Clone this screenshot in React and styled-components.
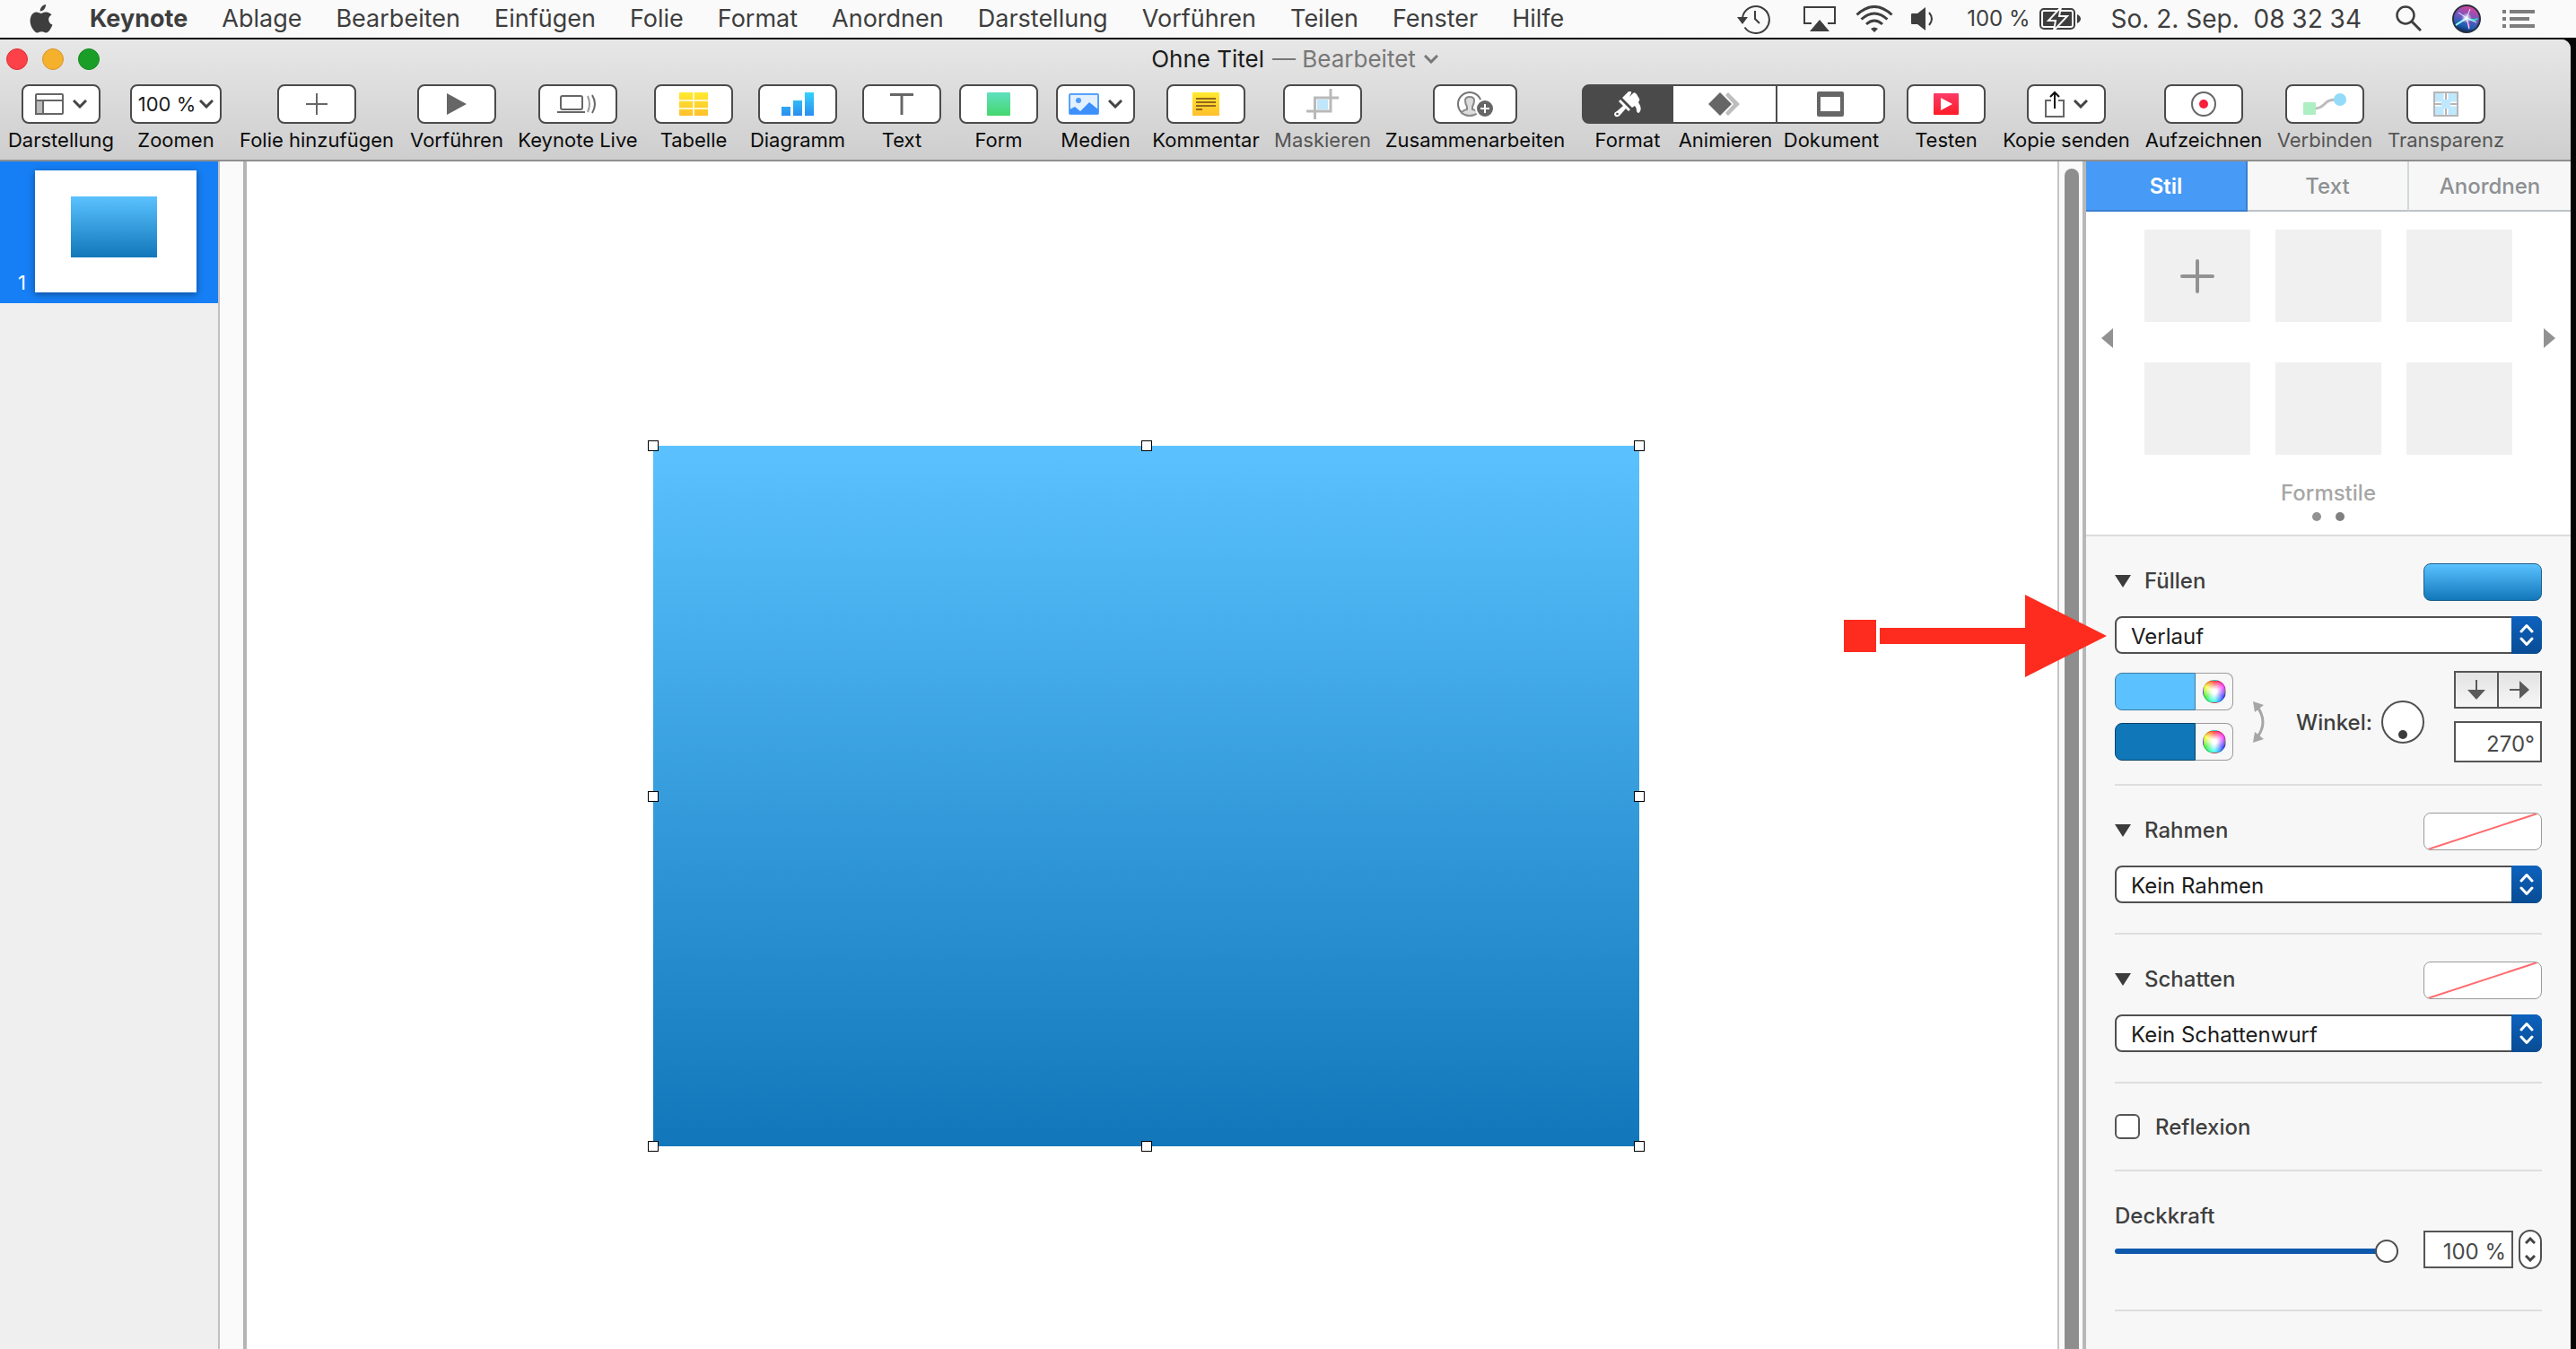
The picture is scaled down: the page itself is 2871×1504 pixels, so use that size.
import React from 'react';
import styled, { createGlobalStyle } from 'styled-components';

const MENUS = [
  'Ablage',
  'Bearbeiten',
  'Einfügen',
  'Folie',
  'Format',
  'Anordnen',
  'Darstellung',
  'Vorführen',
  'Teilen',
  'Fenster',
  'Hilfe',
];

function App() {
  return (
    <Desktop>
      <GlobalStyle />
      <MenuBar />
      <Window>
        <WindowHeader>
          <TitleBar />
          <Toolbar />
        </WindowHeader>
        <WindowBody>
          <Navigator />
          <Canvas />
          <Inspector />
        </WindowBody>
      </Window>
    </Desktop>
  );
}

function MenuBar() {
  return (
    <MenuBarWrapper>
      <MenuButton aria-label='Apple'>
        <AppleIcon />
      </MenuButton>
      <MenuList>
        <MenuButton $bold>Keynote</MenuButton>
        {MENUS.map((menu) => (
          <MenuButton key={menu}>{menu}</MenuButton>
        ))}
      </MenuList>
      <StatusArea>
        <TimeMachineIcon />
        <Status $gap={37}>
          <AirPlayIcon />
        </Status>
        <Status $gap={22}>
          <WifiIcon />
        </Status>
        <Status $gap={20}>
          <VolumeIcon />
        </Status>
        <Status $gap={36} $small>
          100 %
        </Status>
        <Status $gap={10}>
          <BatteryIcon />
        </Status>
        <Status $gap={34}>{'So. 2. Sep.  08 32 34'}</Status>
        <Status $gap={38}>
          <SearchIcon />
        </Status>
        <Status $gap={34}>
          <SiriIcon />
        </Status>
        <Status $gap={24}>
          <ListIcon />
        </Status>
      </StatusArea>
    </MenuBarWrapper>
  );
}

function TitleBar() {
  return (
    <TitleRow>
      <TrafficLights>
        <Light $color='#fc4148' $edge='#dd3038' aria-label='Schließen' />
        <Light $color='#f5b02c' $edge='#d8962a' aria-label='Minimieren' />
        <Light $color='#1a9e28' $edge='#128a20' aria-label='Vergrößern' />
      </TrafficLights>
      <Title>
        Ohne Titel <Edited>— Bearbeitet</Edited>
        <Chevron color='#777' />
      </Title>
    </TitleRow>
  );
}

function Toolbar() {
  return (
    <Tools>
      <Tool label='Darstellung' width={114}>
        <LayoutIcon />
        <Chevron />
      </Tool>
      <Tool label='Zoomen' width={102} buttonWidth={102} tight>
        100 %
        <Chevron />
      </Tool>
      <Tool label='Folie hinzufügen' width={172}>
        <PlusIcon />
      </Tool>
      <Tool label='Vorführen' width={100}>
        <PlayIcon />
      </Tool>
      <Tool label='Keynote Live' width={130}>
        <LiveIcon />
      </Tool>
      <Tool label='Tabelle' width={88}>
        <TableIcon />
      </Tool>
      <Tool label='Diagramm' width={104}>
        <ChartIcon />
      </Tool>
      <Tool label='Text' width={88}>
        <TextIcon />
      </Tool>
      <Tool label='Form' width={88}>
        <ShapeIcon />
      </Tool>
      <Tool label='Medien' width={88}>
        <MediaIcon />
        <Chevron />
      </Tool>
      <Tool label='Kommentar' width={118}>
        <CommentIcon />
      </Tool>
      <Tool label='Maskieren' width={102} disabled>
        <MaskIcon />
      </Tool>
      <Tool label='Zusammenarbeiten' width={198} buttonWidth={94}>
        <CollaborateIcon />
      </Tool>
      <Segments>
        <Segment>
          <SegmentButton id='seg-format' $active $width={102}>
            <BrushIcon />
          </SegmentButton>
          <ToolLabel htmlFor='seg-format'>Format</ToolLabel>
        </Segment>
        <Segment>
          <SegmentButton id='seg-animate' $width={116}>
            <AnimateIcon />
          </SegmentButton>
          <ToolLabel htmlFor='seg-animate'>Animieren</ToolLabel>
        </Segment>
        <Segment>
          <SegmentButton id='seg-document' $width={120}>
            <DocumentIcon />
          </SegmentButton>
          <ToolLabel htmlFor='seg-document'>Dokument</ToolLabel>
        </Segment>
      </Segments>
      <Tool label='Testen' width={88}>
        <TestIcon />
      </Tool>
      <Tool label='Kopie senden' width={140}>
        <ShareIcon />
        <Chevron />
      </Tool>
      <Tool label='Aufzeichnen' width={126}>
        <RecordIcon />
      </Tool>
      <Tool label='Verbinden' width={104} disabled>
        <ConnectIcon />
      </Tool>
      <Tool label='Transparenz' width={126} disabled>
        <AlphaIcon />
      </Tool>
    </Tools>
  );
}

function Tool({ label, width, buttonWidth = 88, tight, disabled, children }) {
  const id = React.useId();

  return (
    <ToolWrapper $width={width}>
      <ToolButton id={id} $width={buttonWidth} $tight={tight} disabled={disabled}>
        {children}
      </ToolButton>
      <ToolLabel htmlFor={id} $disabled={disabled}>
        {label}
      </ToolLabel>
    </ToolWrapper>
  );
}

function Navigator() {
  return (
    <>
      <Sidebar>
        <SlideItem>
          <SlideNumber>1</SlideNumber>
          <Thumbnail>
            <ThumbnailShape />
          </Thumbnail>
        </SlideItem>
      </Sidebar>
      <SidebarGutter />
    </>
  );
}

function Canvas() {
  return (
    <>
      <Stage>
        <SelectedShape>
          {[0, 50, 100].map((y) =>
            [0, 50, 100].map((x) =>
              x === 50 && y === 50 ? null : (
                <Handle key={`${x}-${y}`} $x={x} $y={y} />
              )
            )
          )}
        </SelectedShape>
      </Stage>
      <ScrollTrack>
        <ScrollThumb />
      </ScrollTrack>
    </>
  );
}

function Inspector() {
  return (
    <Panel>
      <Tabs role='tablist'>
        <Tab role='tab' aria-selected='true' $active>
          Stil
        </Tab>
        <Tab role='tab'>Text</Tab>
        <Tab role='tab'>Anordnen</Tab>
      </Tabs>
      <ShapeStyles />
      <Sections>
        <FillSection />
        <Section>
          <SectionHeader title='Rahmen' />
          <Popup label='Rahmenart' value='Kein Rahmen' />
        </Section>
        <Section>
          <SectionHeader title='Schatten' />
          <Popup label='Schattenart' value='Kein Schattenwurf' />
        </Section>
        <CheckSection>
          <Checkbox type='checkbox' id='reflection' />
          <label htmlFor='reflection'>Reflexion</label>
        </CheckSection>
        <OpacitySection />
      </Sections>
    </Panel>
  );
}

function ShapeStyles() {
  return (
    <StylesWrapper>
      <StylesRow>
        <PageButton aria-label='Zurück'>
          <svg width='13' height='22'>
            <path d='M13 0V22L0 11z' fill='#929292' />
          </svg>
        </PageButton>
        <StylesGrid>
          <StyleBox aria-label='Stil hinzufügen'>
            <svg width='38' height='38' stroke='#929292' strokeWidth='4'>
              <path d='M19 2V36M2 19H36' strokeLinecap='round' />
            </svg>
          </StyleBox>
          {[2, 3, 4, 5, 6].map((n) => (
            <StyleBox key={n} aria-label={`Formstil ${n}`} />
          ))}
        </StylesGrid>
        <PageButton aria-label='Weiter'>
          <svg width='13' height='22'>
            <path d='M0 0V22L13 11z' fill='#929292' />
          </svg>
        </PageButton>
      </StylesRow>
      <StylesCaption>Formstile</StylesCaption>
      <Dots>
        <Dot $color='#929292' />
        <Dot $color='#808080' />
      </Dots>
    </StylesWrapper>
  );
}

function SectionHeader({ title, filled }) {
  return (
    <HeaderRow>
      <Disclosure aria-expanded='true'>
        <svg width='18' height='14'>
          <path d='M0 0H18L9 14z' fill='#3c3c3c' />
        </svg>
        {title}
      </Disclosure>
      <Preview $filled={filled} aria-label={`${title} auswählen`}>
        {!filled && (
          <svg width='130' height='40' stroke='#ff6b6e' strokeWidth='2'>
            <path d='M4 40L126 0' />
          </svg>
        )}
      </Preview>
    </HeaderRow>
  );
}

function Popup({ label, value }) {
  return (
    <PopupWrapper>
      <Select aria-label={label} defaultValue={value}>
        <option>{value}</option>
      </Select>
      <PopupCap>
        <svg width='16' height='26' fill='none' stroke='white' strokeWidth='3'>
          <path
            d='M2 9L8 2.500L14 9M2 17L8 23.500L14 17'
            strokeLinecap='round'
            strokeLinejoin='round'
          />
        </svg>
      </PopupCap>
    </PopupWrapper>
  );
}

function FillSection() {
  return (
    <Section>
      <SectionHeader title='Füllen' filled />
      <PopupAnchor>
        <Popup label='Füllart' value='Verlauf' />
        <Arrow width='293' height='92' fill='#fd2c1f'>
          <rect x='0' y='28' width='36' height='36' />
          <rect x='40' y='37' width='165' height='18' />
          <path d='M202 0V92L293 46z' />
        </Arrow>
      </PopupAnchor>
      <GradientRow>
        <Stack>
          <ColorWell name='Startfarbe' color='#5bc1ff' edge='#3d7ba3' />
          <ColorWell name='Endfarbe' color='#1077b9' edge='#0b4468' />
        </Stack>
        <SwapButton aria-label='Farben tauschen'>
          <svg width='16' height='46' fill='#a6a6a6'>
            <path
              d='M5 5Q19 23 5 41'
              fill='none'
              stroke='#a6a6a6'
              strokeWidth='3'
            />
            <path d='M1 0L13 4L3 12zM1 46L13 42L3 34z' />
          </svg>
        </SwapButton>
        <AngleGroup>
          <span id='angle-label'>Winkel:</span>
          <Dial role='slider' aria-labelledby='angle-label' aria-valuenow='270'>
            <DialDot />
          </Dial>
        </AngleGroup>
        <Stack>
          <Directions>
            <DirectionButton aria-label='Nach unten'>
              <svg width='20' height='22' fill='#5a5a5a'>
                <path d='M9 0H11V11H20L10 22L0 11H9z' />
              </svg>
            </DirectionButton>
            <DirectionButton aria-label='Nach rechts'>
              <svg width='22' height='20' fill='#5a5a5a'>
                <path d='M0 9V11H11V20L22 10L11 0V9z' />
              </svg>
            </DirectionButton>
          </Directions>
          <Field
            $width={98}
            $height={46}
            aria-labelledby='angle-label'
            defaultValue='270°'
          />
        </Stack>
      </GradientRow>
    </Section>
  );
}

function ColorWell({ name, color, edge }) {
  return (
    <Well>
      <WellColor $color={color} $edge={edge} aria-label={name} />
      <WellPicker aria-label={`${name} im Farbrad wählen`}>
        <Wheel />
      </WellPicker>
    </Well>
  );
}

function OpacitySection() {
  const [opacity, setOpacity] = React.useState(100);

  return (
    <LastSection>
      <label htmlFor='opacity'>Deckkraft</label>
      <OpacityRow>
        <Slider
          id='opacity'
          type='range'
          min='0'
          max='100'
          value={opacity}
          onChange={(ev) => setOpacity(Number(ev.target.value))}
        />
        <OpacityValue>
          <Field
            $width={100}
            $height={42}
            aria-label='Deckkraft in Prozent'
            value={`${opacity} %`}
            readOnly
          />
          <Stepper>
            <StepButton
              aria-label='Erhöhen'
              onClick={() => setOpacity(Math.min(100, opacity + 1))}
            >
              <svg width='12' height='8' fill='none' stroke='#444' strokeWidth='3'>
                <path d='M1 7L6 2L11 7' />
              </svg>
            </StepButton>
            <StepButton
              aria-label='Verringern'
              onClick={() => setOpacity(Math.max(0, opacity - 1))}
            >
              <svg width='12' height='8' fill='none' stroke='#444' strokeWidth='3'>
                <path d='M1 1L6 6L11 1' />
              </svg>
            </StepButton>
          </Stepper>
        </OpacityValue>
      </OpacityRow>
    </LastSection>
  );
}

/* Menu bar icons */

const AppleIcon = () => (
  <svg width='26' height='32' viewBox='0 0 26 32' fill='#3e3e3e'>
    <path d='M18 0c.2 2-.6 3.900-1.700 5.200-1.200 1.400-2.900 2.300-4.600 2.200-.2-1.900.7-3.800 1.800-5C14.700 1.100 16.500.1 18 0z' />
    <path d='M24.500 11.400c-2.200 1.400-3.300 3-3.300 5.300 0 2.700 1.500 4.800 4.300 5.900-.7 2-1.700 3.900-2.900 5.600-1.200 1.700-2.400 3.200-4.400 3.200-1.900 0-2.500-1.100-4.800-1.100s-3 1.100-4.800 1.200c-1.900.1-3.400-1.800-4.600-3.500C1 24-.6 17.700 1.600 12.900c1.200-2.600 3.500-4.200 6-4.300 2 0 3.700 1.300 4.900 1.300s3.400-1.600 5.700-1.400c1 0 4.200.4 6.300 2.900z' />
  </svg>
);

const TimeMachineIcon = () => (
  <svg width='37' height='34' viewBox='0 0 37 34' fill='none' stroke='#3e3e3e' strokeWidth='2'>
    <path d='M6 16A15 15 0 1 1 8.500 26.500' />
    <path d='M20 8V17L25 22' />
    <path d='M0 15H12L6 23z' fill='#3e3e3e' stroke='none' />
  </svg>
);

const AirPlayIcon = () => (
  <svg width='36' height='30' viewBox='0 0 36 30'>
    <path d='M9 20H1V2H35V20H27' fill='none' stroke='#3e3e3e' strokeWidth='2' />
    <path d='M18 16L29 29H7z' fill='#3e3e3e' />
  </svg>
);

const WifiIcon = () => (
  <svg width='42' height='30' viewBox='0 0 42 30' fill='none' stroke='#3e3e3e' strokeWidth='3'>
    <path d='M1.500 10.500Q21-7.500 40.500 10.500M6.500 15.500Q21 2.500 35.500 15.500M12 21Q21 13 30 21' />
    <path d='M17 26Q21 23 25 26L21 30z' fill='#3e3e3e' stroke='none' />
  </svg>
);

const VolumeIcon = () => (
  <svg width='26' height='26' viewBox='0 0 26 26'>
    <path d='M0 8Q0 7 1 7H7L16 0V26L7 19H1Q0 19 0 18z' fill='#3e3e3e' />
    <path d='M20 6Q26 13 20 20' fill='none' stroke='#3e3e3e' strokeWidth='2' />
  </svg>
);

const BatteryIcon = () => (
  <svg width='46' height='26' viewBox='0 0 46 26'>
    <rect x='1' y='2' width='38' height='22' rx='4' fill='none' stroke='#3e3e3e' strokeWidth='2' />
    <rect x='4' y='5' width='32' height='16' rx='1' fill='#3e3e3e' />
    <path d='M42 8Q46 10 46 13Q46 16 42 18z' fill='#3e3e3e' />
    <path
      d='M24 0L10 15H18L16 26L31 10H22z'
      fill='#3e3e3e'
      stroke='#fafafa'
      strokeWidth='2'
    />
  </svg>
);

const SearchIcon = () => (
  <svg width='29' height='30' viewBox='0 0 29 30' fill='none' stroke='#3e3e3e'>
    <circle cx='11' cy='11' r='9.500' strokeWidth='2.500' />
    <path d='M18 18L28 28' strokeWidth='3' />
  </svg>
);

const SiriIcon = () => (
  <svg width='32' height='32' viewBox='0 0 32 32'>
    <defs>
      <linearGradient id='siri' x1='0.6' y1='0' x2='0.3' y2='1'>
        <stop offset='0' stopColor='#e0409a' />
        <stop offset='0.45' stopColor='#6c58c0' />
        <stop offset='0.75' stopColor='#1a5fb4' />
        <stop offset='1' stopColor='#14184a' />
      </linearGradient>
      <radialGradient id='siri-glow'>
        <stop offset='0' stopColor='white' />
        <stop offset='1' stopColor='white' stopOpacity='0' />
      </radialGradient>
    </defs>
    <circle cx='16' cy='16' r='15' fill='url(#siri)' stroke='#26303c' strokeWidth='2' />
    <path d='M16 15Q24 17 29 15Q26 22 16 16z' fill='#35d9c4' />
    <path d='M16 15L18 28Q22 24 16 15z' fill='#f04fb0' />
    <path d='M16 16L4 23M16 15L27 20M16 15L19 27M16 15L20 5M16 15L7 9' stroke='#e6f4ff' strokeWidth='1' />
    <path d='M16 15L4 23' stroke='#9ff' strokeWidth='2' />
    <circle cx='16' cy='15' r='6' fill='url(#siri-glow)' />
  </svg>
);

const ListIcon = () => (
  <svg width='36' height='20' viewBox='0 0 36 20' fill='#7d7d7d'>
    <path d='M0 0h4v4H0zM0 8h4v4H0zM0 16h4v4H0zM8 0h28v4H8zM8 8h22v4H8zM8 16h28v4H8z' />
  </svg>
);

/* Toolbar icons */

const Chevron = ({ color = '#444' }) => (
  <svg width='16' height='10' viewBox='0 0 16 10' fill='none' stroke={color} strokeWidth='3'>
    <path d='M1 1L8 8L15 1' />
  </svg>
);

const LayoutIcon = () => (
  <svg width='32' height='24' viewBox='0 0 32 24' fill='none' stroke='#666' strokeWidth='2'>
    <path d='M1 8H9V23H1z' fill='#bbb' />
    <rect x='1' y='1' width='30' height='22' rx='1' />
    <path d='M1 8H31M9 8V23' />
  </svg>
);

const PlusIcon = () => (
  <svg width='24' height='24' stroke='#666' strokeWidth='2'>
    <path d='M12 0V24M0 12H24' />
  </svg>
);

const PlayIcon = () => (
  <svg width='22' height='24' fill='#666'>
    <path d='M0 0V24L22 12z' />
  </svg>
);

const LiveIcon = () => (
  <svg width='46' height='22' viewBox='0 0 46 22' fill='none' stroke='#666' strokeWidth='2'>
    <rect x='4' y='2' width='24' height='15' rx='2' />
    <path d='M0 20H31' />
    <path d='M34 2Q38 11 34 20' stroke='#999' />
    <path d='M39 1Q45 11 39 21' />
  </svg>
);

const TableIcon = () => (
  <svg width='32' height='26' viewBox='0 0 32 26'>
    <defs>
      <linearGradient id='yellow' x2='0' y2='1'>
        <stop offset='0' stopColor='#ffea2e' />
        <stop offset='1' stopColor='#ffbf2c' />
      </linearGradient>
    </defs>
    <rect width='32' height='26' rx='1' fill='url(#yellow)' />
    <path d='M0 9H32M0 18H32M16 0V26' stroke='#fff6c8' strokeWidth='2' />
  </svg>
);

const ChartIcon = () => (
  <svg width='36' height='26' viewBox='0 0 36 26'>
    <defs>
      <linearGradient id='bars' gradientUnits='userSpaceOnUse' x1='0' y1='0' x2='0' y2='26'>
        <stop offset='0' stopColor='#35d2fb' />
        <stop offset='1' stopColor='#2a8df0' />
      </linearGradient>
    </defs>
    <path d='M0 16H10V26H0zM13 9H23V26H13zM26 0H36V26H26z' fill='url(#bars)' />
  </svg>
);

const TextIcon = () => (
  <svg width='26' height='24' fill='#666'>
    <path d='M0 0H26V3H14.500V24H11.500V3H0z' />
  </svg>
);

const ShapeIcon = () => (
  <svg width='26' height='26'>
    <defs>
      <linearGradient id='green' x2='0' y2='1'>
        <stop offset='0' stopColor='#5fe0c0' />
        <stop offset='1' stopColor='#45d76c' />
      </linearGradient>
    </defs>
    <rect width='26' height='26' rx='1' fill='url(#green)' />
  </svg>
);

const MediaIcon = () => (
  <svg width='34' height='24' viewBox='0 0 34 24'>
    <rect x='1' y='1' width='32' height='22' rx='1' fill='#e2f0ff' stroke='#58a2fb' strokeWidth='2' />
    <circle cx='11' cy='8' r='3' fill='#4c9bfa' />
    <path d='M1 18L7 15L13 20L23 10L33 18V23H1z' fill='#3d90fa' />
  </svg>
);

const CommentIcon = () => (
  <svg width='30' height='26' viewBox='0 0 30 26'>
    <rect width='30' height='26' rx='1' fill='url(#yellow)' />
    <path d='M4 7H26M4 11H26M4 15H26M4 19H11' stroke='#94661c' strokeWidth='2' />
  </svg>
);

const MaskIcon = () => (
  <svg width='36' height='34' viewBox='0 0 36 34' fill='none' stroke='#b9b9b9' strokeWidth='3'>
    <rect x='12' y='12' width='12' height='11' fill='#bfe6fb' stroke='none' />
    <path d='M27 0V25H0M9.500 34V10H36' />
  </svg>
);

const CollaborateIcon = () => (
  <svg width='40' height='28' viewBox='0 0 40 28' fill='none'>
    <circle cx='14' cy='14' r='13' fill='white' stroke='#757575' strokeWidth='2' />
    <path
      d='M5 24Q6 21 11 20V17Q9 14 9 10Q9 6 14 6Q19 6 19 10Q19 14 17 17V20Q22 21 23 24Q14 30 5 24z'
      fill='#dcdcdc'
      stroke='#8a8a8a'
      strokeWidth='2'
    />
    <circle cx='31' cy='19' r='10' fill='#666' stroke='white' strokeWidth='2' />
    <path d='M31 14V24M26 19H36' stroke='white' strokeWidth='2' />
  </svg>
);

const BrushIcon = () => (
  <svg width='30' height='29' viewBox='0 0 30 29' fill='white'>
    <path d='M9 7L16 0Q20-1 19 2L17 6L21 2Q23 0 25 3L28 8Q29 10 27 12Q31 18 29 22Q27 26 25 22Q25 18 23 16L20 18z' />
    <path d='M7 9L18 20L16 22L13 19L6 27Q2 30 0 26Q0 23 3 22L10 16L5 11z' />
    <circle cx='3.500' cy='25' r='1.300' fill='#4a4a4a' />
  </svg>
);

const AnimateIcon = () => (
  <svg width='36' height='26' viewBox='0 0 36 26'>
    <path d='M19 3L22 0L35 13L22 26L19 23L28 13z' fill='#bdbdbd' />
    <path d='M13 0L26 13L13 26L0 13z' fill='#666' />
  </svg>
);

const DocumentIcon = () => (
  <svg width='30' height='28' viewBox='0 0 30 28'>
    <path
      d='M2 0H28Q30 0 30 2V26Q30 28 28 28H2Q0 28 0 26V2Q0 0 2 0zM4 6V22H26V6z'
      fill='#666'
      fillRule='evenodd'
    />
  </svg>
);

const TestIcon = () => (
  <svg width='28' height='24' viewBox='0 0 28 24'>
    <defs>
      <linearGradient id='red' x2='0' y2='1'>
        <stop offset='0' stopColor='#fd3b68' />
        <stop offset='1' stopColor='#fc1c26' />
      </linearGradient>
    </defs>
    <rect width='28' height='24' rx='1' fill='url(#red)' />
    <path d='M8 5V19L21 12z' fill='white' />
  </svg>
);

const ShareIcon = () => (
  <svg width='22' height='30' viewBox='0 0 22 30' fill='none' strokeWidth='2'>
    <path d='M7 11H1V29H21V11H15' stroke='#666' />
    <path d='M11 20V2M6 7L11 2L16 7' stroke='#111' />
  </svg>
);

const RecordIcon = () => (
  <svg width='28' height='28' viewBox='0 0 28 28'>
    <circle cx='14' cy='14' r='13' fill='white' stroke='#666' strokeWidth='2' />
    <circle cx='14' cy='14' r='5' fill='#fa1f3c' />
  </svg>
);

const ConnectIcon = () => (
  <svg width='48' height='24' viewBox='0 0 48 24'>
    <path d='M13 17C25 17 22 7 36 7' fill='none' stroke='#bcbcbc' strokeWidth='3' />
    <rect y='10' width='14' height='14' rx='1' fill='#adeec3' />
    <circle cx='41' cy='7' r='7' fill='#93dbf8' />
  </svg>
);

const AlphaIcon = () => (
  <svg width='28' height='28' viewBox='0 0 28 28'>
    <rect x='1' y='1' width='26' height='26' fill='#bfe8ff' stroke='#b5b5b5' strokeWidth='2' />
    <path d='M14 2V9M14 19V26M2 14H9M19 14H26' stroke='white' strokeWidth='5' />
    <path d='M14 1V9M14 19V27M1 14H9M19 14H27' stroke='#b5b5b5' strokeWidth='2' />
  </svg>
);

/* Styles */

const GRADIENT = 'linear-gradient(#5bc2ff, #1177ba)';

const GlobalStyle = createGlobalStyle`
  *, *::before, *::after {
    box-sizing: border-box;
  }

  body {
    margin: 0;
    background: #050505;
  }

  body, button, input, select {
    font-family: Inter, 'Liberation Sans', sans-serif;
  }

  button {
    margin: 0;
    padding: 0;
    border: none;
    background: none;
    color: inherit;
  }

  svg {
    display: block;
    flex-shrink: 0;
  }
`;

const Desktop = styled.div`
  display: flex;
  flex-direction: column;
  min-height: 100vh;
  overflow: hidden;
`;

const MenuBarWrapper = styled.header`
  display: flex;
  align-items: center;
  height: 42px;
  padding: 0 46px 0 33px;
  margin-bottom: 2px;
  background: #fafafa;
  color: #3e3e3e;
`;

const MenuList = styled.nav`
  display: flex;
  gap: 38px;
  margin-left: 41px;
`;

const MenuButton = styled.button`
  font-size: 27px;
  font-weight: ${(p) => (p.$bold ? 700 : 400)};
  line-height: 40px;
  white-space: nowrap;
`;

const StatusArea = styled.div`
  display: flex;
  align-items: center;
  margin-left: auto;
`;

const Status = styled.div`
  margin-left: ${(p) => p.$gap}px;
  font-size: ${(p) => (p.$small ? 24 : 28)}px;
  line-height: 40px;
  white-space: pre;
`;

const Window = styled.main`
  flex: 1;
  display: flex;
  flex-direction: column;
  margin-right: 6px;
  border-radius: 0 10px 0 0;
  overflow: hidden;
  background: white;
`;

const WindowHeader = styled.div`
  background: linear-gradient(#e7e7e7, #cecece);
  border-bottom: 2px solid #8f8f8f;
`;

const TitleRow = styled.div`
  display: grid;
  grid-template-columns: 1fr auto 1fr;
  align-items: center;
  height: 44px;
  padding: 0 0 0 7px;
`;

const TrafficLights = styled.div`
  display: flex;
  gap: 16px;
`;

const Light = styled.button`
  width: 24px;
  height: 24px;
  border-radius: 50%;
  border: 1px solid ${(p) => p.$edge};
  background: ${(p) => p.$color};
`;

const Title = styled.div`
  display: flex;
  align-items: center;
  gap: 9px;
  padding-left: 14px;
  font-size: 26px;
  line-height: 44px;
  color: #1c1c1c;
`;

const Edited = styled.span`
  color: #777;
`;

const Tools = styled.div`
  display: flex;
  gap: 20px;
  padding: 6px 11px 8px;
`;

const ToolWrapper = styled.div`
  display: flex;
  flex-direction: column;
  align-items: center;
  flex: 0 0 ${(p) => p.$width}px;
  width: ${(p) => p.$width}px;
`;

const ToolButton = styled.button`
  display: flex;
  align-items: center;
  justify-content: center;
  gap: ${(p) => (p.$tight ? 4 : 10)}px;
  width: ${(p) => p.$width}px;
  height: 44px;
  border: 2px solid #4b4b4b;
  border-radius: 8px;
  background: white;
  color: #1c1c1c;
  font-size: 22px;
  white-space: nowrap;
`;

const ToolLabel = styled.label`
  margin-top: 4px;
  font-size: 22px;
  line-height: 28px;
  white-space: nowrap;
  color: ${(p) => (p.$disabled ? '#555' : '#0c0c0c')};
`;

const Segments = styled.div`
  display: flex;
  margin-right: 4px;
`;

const Segment = styled.div`
  display: flex;
  flex-direction: column;
  align-items: center;

  &:first-child button {
    border-radius: 8px 0 0 8px;
    border-left-width: 2px;
  }

  &:last-child button {
    border-radius: 0 8px 8px 0;
  }
`;

const SegmentButton = styled.button`
  display: grid;
  place-content: center;
  width: ${(p) => p.$width}px;
  height: 44px;
  border: 2px solid #4b4b4b;
  border-left-width: 0;
  background: ${(p) => (p.$active ? '#4a4a4a' : 'white')};
`;

const WindowBody = styled.div`
  flex: 1;
  display: flex;
`;

const Sidebar = styled.aside`
  flex: 0 0 243px;
  background: #efefef;
`;

const SlideItem = styled.div`
  display: flex;
  align-items: flex-end;
  justify-content: flex-end;
  gap: 10px;
  padding: 10px 24px 12px 0;
  background: #167ff5;
`;

const SlideNumber = styled.span`
  font-size: 22px;
  line-height: 22px;
  color: white;
`;

const Thumbnail = styled.div`
  width: 180px;
  height: 136px;
  padding: 29px 44px 39px 40px;
  background: white;
  box-shadow: 0 2px 8px rgba(0, 0, 0, 0.4);
`;

const ThumbnailShape = styled.div`
  height: 100%;
  background: ${GRADIENT};
`;

const SidebarGutter = styled.div`
  flex: 0 0 32px;
  border-left: 2px solid #c0c0c0;
  border-right: 4px solid #b4b4b4;
  background: #fafafa;
`;

const Stage = styled.section`
  position: relative;
  flex: 1;
  background: white;
`;

/* The selected object sits freely on the slide */
const SelectedShape = styled.div`
  position: absolute;
  left: 453px;
  top: 317px;
  width: 1099px;
  height: 781px;
  background: ${GRADIENT};
`;

const Handle = styled.span`
  position: absolute;
  left: ${(p) => p.$x}%;
  top: ${(p) => p.$y}%;
  width: 12px;
  height: 12px;
  margin: -6px;
  border: 1px solid black;
  background: white;
`;

const ScrollTrack = styled.div`
  flex: 0 0 32px;
  padding: 8px 4px 0 6px;
  border-left: 2px solid #c4c4c4;
  border-right: 4px solid #b8b8b8;
  background: #fafafa;
`;

const ScrollThumb = styled.div`
  width: 16px;
  height: 100%;
  border-radius: 8px 8px 0 0;
  background: #8e8e8e;
`;

const Panel = styled.aside`
  flex: 0 0 540px;
  background: #f7f7f7;
  color: #3f3f3f;
  font-size: 24px;
  font-weight: 500;
`;

const Tabs = styled.div`
  display: grid;
  grid-template-columns: repeat(3, 1fr);
`;

const Tab = styled.button`
  height: 56px;
  border-bottom: 2px solid ${(p) => (p.$active ? '#3a7fd0' : '#bcc2c8')};
  border-right: 2px solid ${(p) => (p.$active ? '#3a7fd0' : '#d3d7db')};
  background: ${(p) => (p.$active ? '#489af7' : '#f7f7f7')};
  color: ${(p) => (p.$active ? 'white' : '#8d9093')};
  font-size: 24px;
  font-weight: ${(p) => (p.$active ? 600 : 500)};

  &:last-child {
    border-right: none;
  }
`;

const StylesWrapper = styled.div`
  padding: 20px 17px 15px;
  border-bottom: 2px solid #dcdcdc;
  background: white;
`;

const StylesRow = styled.div`
  display: flex;
  align-items: center;
  justify-content: space-between;
`;

const PageButton = styled.button`
  padding-bottom: 10px;
`;

const StylesGrid = styled.div`
  display: grid;
  grid-template-columns: repeat(3, 118px);
  gap: 45px 28px;
`;

const StyleBox = styled.button`
  display: grid;
  place-content: center;
  height: 103px;
  background: #f0f0f0;
`;

const StylesCaption = styled.div`
  margin-top: 28px;
  line-height: 30px;
  text-align: center;
  color: #a6a6a6;
`;

const Dots = styled.div`
  display: flex;
  justify-content: center;
  gap: 16px;
  margin-top: 6px;
`;

const Dot = styled.span`
  width: 10px;
  height: 10px;
  border-radius: 50%;
  background: ${(p) => p.$color};
`;

const Sections = styled.div`
  padding: 0 32px;
`;

const Section = styled.section`
  padding: 30px 0 33px;
  border-bottom: 2px solid #dedede;
`;

const HeaderRow = styled.div`
  display: flex;
  justify-content: space-between;
  margin-bottom: 17px;
`;

const Disclosure = styled.button`
  display: flex;
  align-items: center;
  gap: 15px;
  height: 39px;
  font-size: 24px;
  font-weight: 500;
`;

const Preview = styled.button`
  width: 132px;
  height: 42px;
  border: 1px solid ${(p) => (p.$filled ? '#1f5f8b' : '#9a9a9a')};
  border-radius: 8px;
  overflow: hidden;
  background: ${(p) => (p.$filled ? GRADIENT : 'white')};
`;

const PopupAnchor = styled.div`
  position: relative;
`;

const PopupWrapper = styled.div`
  display: grid;
  grid-template-columns: 1fr 34px;
  height: 42px;
`;

const Select = styled.select`
  grid-area: 1 / 1 / 2 / 3;
  appearance: none;
  padding: 2px 44px 0 16px;
  border: 2px solid #505050;
  border-radius: 8px;
  background: white;
  color: #1c1c1c;
  font-size: 24px;
`;

const PopupCap = styled.span`
  grid-area: 1 / 2 / 2 / 3;
  display: grid;
  place-content: center;
  border-radius: 0 8px 8px 0;
  background: linear-gradient(#0d62be, #084c94);
  pointer-events: none;
`;

/* Callout pointing at the fill type */
const Arrow = styled.svg`
  position: absolute;
  top: -24px;
  right: calc(100% + 9px);
  z-index: 1;
`;

const GradientRow = styled.div`
  display: flex;
  justify-content: space-between;
  align-items: center;
  margin: 19px 0 -9px;
`;

const Stack = styled.div`
  display: flex;
  flex-direction: column;
  gap: 14px;
`;

const Well = styled.div`
  display: flex;
  width: 132px;
  height: 42px;
`;

const WellColor = styled.button`
  flex: 1;
  border: 1px solid ${(p) => p.$edge};
  border-radius: 8px 0 0 8px;
  background: ${(p) => p.$color};
`;

const WellPicker = styled.button`
  display: grid;
  place-content: center;
  width: 42px;
  border: 1px solid #9a9a9a;
  border-left: none;
  border-radius: 0 8px 8px 0;
`;

const Wheel = styled.span`
  width: 26px;
  height: 26px;
  border: 1px solid rgba(0, 0, 0, 0.2);
  border-radius: 50%;
  background:
    radial-gradient(white 15%, transparent 75%),
    conic-gradient(#f22, #f3f, #33f, #3ff, #3e3, #ff3, #f22);
`;

const SwapButton = styled.button`
  padding-top: 12px;
  margin-left: -12px;
`;

const AngleGroup = styled.div`
  display: flex;
  align-items: center;
  gap: 10px;
  padding-top: 12px;
`;

const Dial = styled.div`
  display: flex;
  align-items: flex-end;
  justify-content: center;
  width: 48px;
  height: 48px;
  padding-bottom: 3px;
  border: 2px solid #505050;
  border-radius: 50%;
  background: white;
`;

const DialDot = styled.span`
  width: 10px;
  height: 10px;
  border-radius: 50%;
  background: #3c3c3c;
`;

const Directions = styled.div`
  display: flex;
  height: 42px;
  border: 2px solid #555;
`;

const DirectionButton = styled.button`
  flex: 1;
  display: grid;
  place-content: center;
  background: linear-gradient(#e2e2e2, #f7f7f7);

  & + & {
    border-left: 2px solid #555;
  }
`;

const Field = styled.input`
  width: ${(p) => p.$width}px;
  height: ${(p) => p.$height}px;
  padding: 4px 6px 0;
  border: 2px solid #555;
  background: white;
  color: #4a4a4a;
  font-size: 24px;
  text-align: right;
`;

const CheckSection = styled.div`
  display: flex;
  align-items: center;
  gap: 17px;
  height: 98px;
  border-bottom: 2px solid #dedede;
`;

const Checkbox = styled.input`
  appearance: none;
  width: 28px;
  height: 28px;
  margin: 0;
  border: 2px solid #555;
  border-radius: 6px;
  background: white;
`;

const LastSection = styled.section`
  padding: 34px 0 45px;
  border-bottom: 2px solid #dedede;

  label {
    display: block;
    line-height: 31px;
  }
`;

const OpacityRow = styled.div`
  display: flex;
  align-items: center;
  justify-content: space-between;
`;

const Slider = styled.input`
  appearance: none;
  width: 316px;
  height: 26px;
  margin: 4px 0 0;
  background: transparent;

  &::-webkit-slider-runnable-track {
    height: 6px;
    border-radius: 3px;
    background: #0f59ad;
  }

  &::-webkit-slider-thumb {
    appearance: none;
    width: 26px;
    height: 26px;
    margin-top: -10px;
    border: 2px solid #505050;
    border-radius: 50%;
    background: white;
  }
`;

const OpacityValue = styled.div`
  display: flex;
  align-items: center;
  gap: 6px;
`;

const Stepper = styled.div`
  display: flex;
  flex-direction: column;
  width: 26px;
  height: 44px;
  border: 2px solid #505050;
  border-radius: 13px;
  background: white;
`;

const StepButton = styled.button`
  flex: 1;
  display: grid;
  place-content: center;
`;

export default App;
